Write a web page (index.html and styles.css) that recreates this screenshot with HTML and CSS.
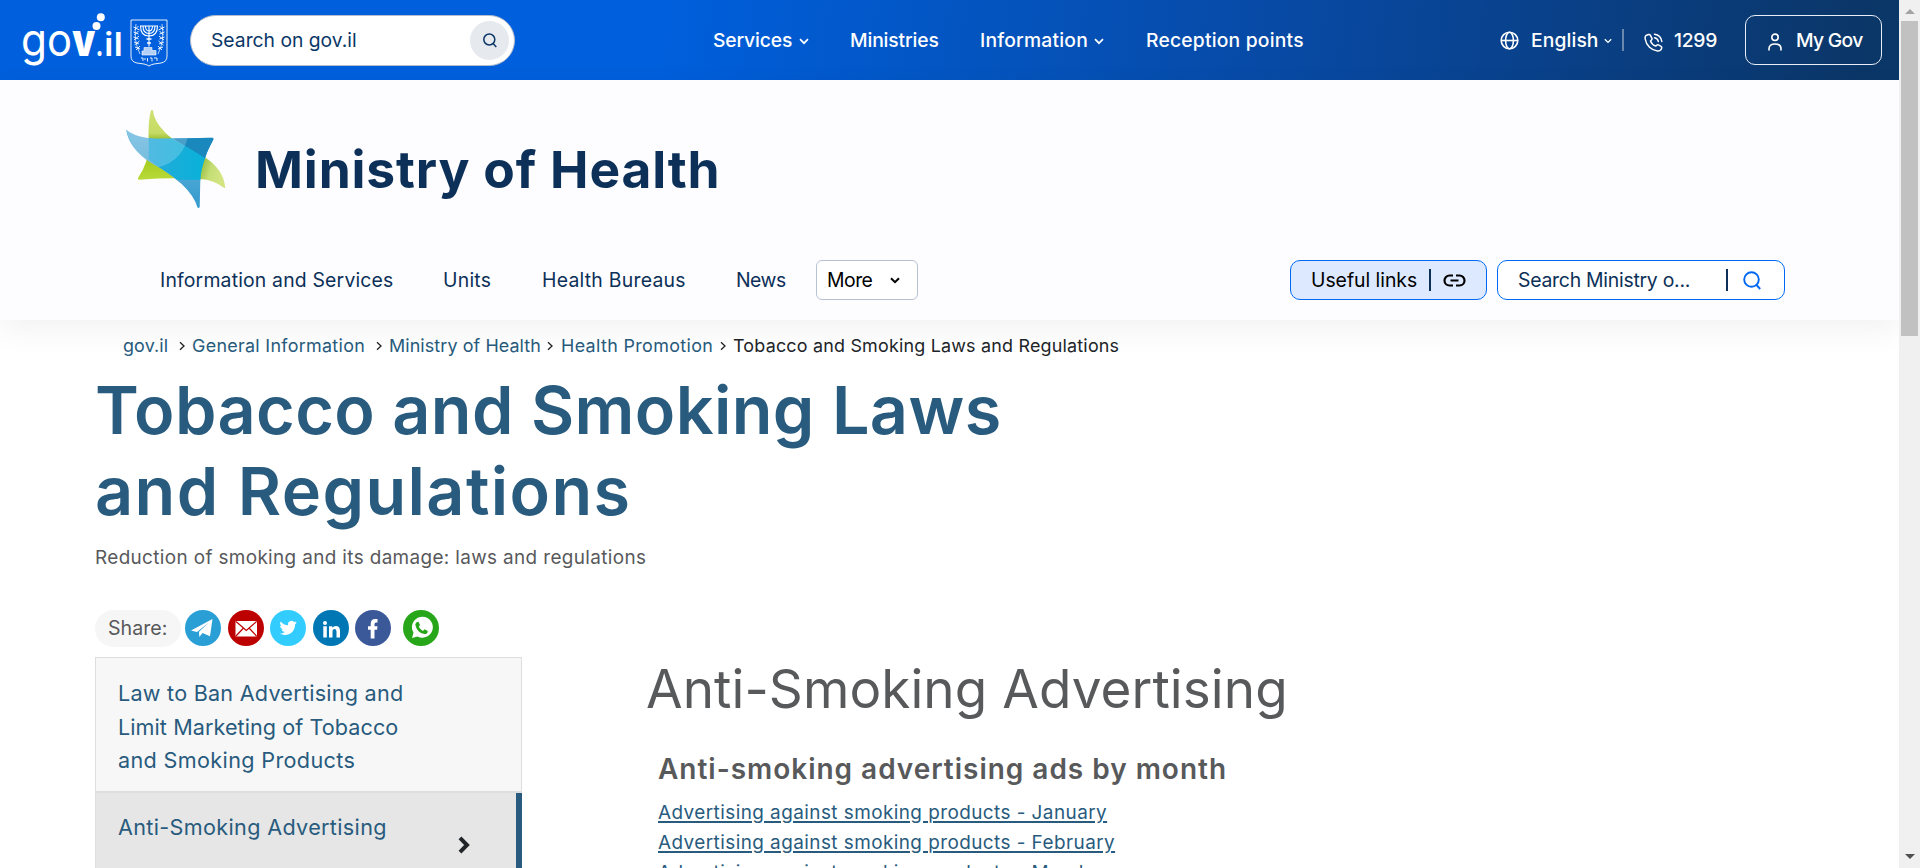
FILE: index.html
```html
<!DOCTYPE html>
<html lang="en">
<head>
<meta charset="utf-8">
<title>Tobacco and Smoking Laws and Regulations</title>
<link rel="stylesheet" href="styles.css">
</head>
<body>
<div class="window">
<div class="page">
  <header class="topbar">
    <svg class="gov-logo" width="106" height="62" viewBox="20 8 106 62" fill="#fff">
      <text class="logo-thin" x="21" y="56" textLength="26" lengthAdjust="spacingAndGlyphs">g</text>
      <text class="logo-thin" x="47" y="56" textLength="25" lengthAdjust="spacingAndGlyphs">o</text>
      <text class="logo-bold" x="72.200" y="56" textLength="23" lengthAdjust="spacingAndGlyphs">v</text>
      <text class="logo-small" x="95.500" y="56" textLength="8" lengthAdjust="spacingAndGlyphs">.</text>
      <text class="logo-small" x="104.300" y="56" textLength="9" lengthAdjust="spacingAndGlyphs">i</text>
      <text class="logo-small" x="113.800" y="56" textLength="9" lengthAdjust="spacingAndGlyphs">l</text>
      <circle cx="96.500" cy="26" r="4"/><circle cx="100.800" cy="17.200" r="4"/>
    </svg>
    <svg class="emblem" width="38" height="48" viewBox="0 0 38 48" fill="none" stroke="#fff">
      <path d="M1 1h36v36q0 6-6 7l-7 1q-3 .5-5 2-2-1.500-5-2l-7-1q-6-1-6-7z" stroke-width=".9"/>
      <path d="M10.500 7q0 10 8.500 10t8.500-10M13 7q0 7.500 6 7.500t6-7.500M15.500 7q0 5 3.500 5t3.500-5M19 6.500v21M10 7h18" stroke-width="1.100"/>
      <path d="M16.500 20h5M17 24h4" stroke-width="1.500"/>
      <path d="M14 28.500h8v3h4V36H12v-4h2z" fill="#fff" fill-opacity=".7" stroke-width=".6"/>
      <path d="M6 5q-3 16 4 30M32 5q3 16-4 30" stroke-width=".7"/>
      <path d="M3.500 8l6 3M3.500 13l5 2M3.500 18l5 2M4 23l5 2M5 28l5 2M8.500 7l-4 4M8.500 12l-4 4M9 17l-5 4M9.500 22l-5 4M10 27l-4 4M34.500 8l-6 3M34.500 13l-5 2M34.500 18l-5 2M34 23l-5 2M33 28l-5 2M29.500 7l4 4M29.500 12l4 4M29 17l5 4M28.500 22l5 4M28 27l4 4" stroke-width=".9"/>
      <path d="M11 39h2v3M15 39v2M17.500 39v3.500M20 39h2v3.500M24 39h3v3" stroke-width=".9"/>
    </svg>
    <div class="gov-search"><span class="t-search">Search on gov.il</span>
      <span class="round"><svg width="14" height="15" viewBox="0 0 14 15" fill="none" stroke="#0b3668" stroke-width="1.500"><circle cx="6.300" cy="6.500" r="5.500"/><path d="M10.300 10.700l3 3.200"/></svg></span>
    </div>
    <nav class="topnav">
      <span class="n-services">Services</span><svg class="chev c1" viewBox="0 0 10 7"><path d="M1 1.200l4 4 4-4"/></svg>
      <span class="n-min">Ministries</span>
      <span class="n-info">Information</span><svg class="chev c2" viewBox="0 0 10 7"><path d="M1 1.200l4 4 4-4"/></svg>
      <span class="n-rec">Reception points</span>
    </nav>
    <div class="tools">
      <svg width="19" height="19" viewBox="0 0 19 19" fill="none" stroke="#fff" stroke-width="1.600"><circle cx="9.500" cy="9.500" r="8.300"/><ellipse cx="9.500" cy="9.500" rx="3.900" ry="8.300"/><path d="M1.500 9.500h16"/></svg>
      <span class="t-eng">English</span><svg class="chev c3" viewBox="0 0 10 7"><path d="M1 1.200l4 4 4-4"/></svg>
      <i class="sep"></i>
      <svg class="phone" width="19" height="19" viewBox="0 0 19 19" fill="none" stroke="#fff" stroke-width="1.500" stroke-linecap="round" stroke-linejoin="round"><path d="M4.500 1.500L2 2.500Q.8 3.500 1.200 6 2 11 5.500 14.300 9 17.600 13.500 18q2.500.2 3.500-1.300l.7-1.700q.2-1-.7-1.600l-2.500-1.500q-1-.5-1.800.3l-.9.900Q8 12 6.500 8l1-1q.8-.8.400-1.700L6.300 2.200q-.6-1-1.800-.7z"/><path d="M10.500 1.200q6.500.8 7.300 7.300M10.500 4.700q3.300.5 3.800 3.800"/></svg>
      <span class="t-1299">1299</span>
      <div class="mygov"><svg width="14" height="18" viewBox="0 0 14 18" fill="none" stroke="#fff" stroke-width="1.600" stroke-linecap="round"><circle cx="7" cy="4.300" r="3.200"/><path d="M1 17v-1.200q0-4.800 6-4.800t6 4.800V17"/></svg><span>My Gov</span></div>
    </div>
  </header>
  <section class="ministry">
    <div class="brand">
      <svg width="102" height="100" viewBox="125.500 109 101 99" preserveAspectRatio="none">
        <defs>
          <linearGradient id="g" x1="0" y1="0" x2="0" y2="1"><stop offset="0" stop-color="#cfe06f"/><stop offset=".33" stop-color="#c6dc66"/><stop offset=".42" stop-color="#9dbf33"/><stop offset=".7" stop-color="#a4cc1c"/><stop offset="1" stop-color="#b9da3a"/></linearGradient>
          <linearGradient id="r" x1="0" y1="0" x2="1" y2=".4"><stop offset="0" stop-color="#8fb63b"/><stop offset=".5" stop-color="#c6de76"/><stop offset="1" stop-color="#d2e582"/></linearGradient>
          <linearGradient id="b" x1="0" y1="0" x2="0" y2="1"><stop offset="0" stop-color="#6db8df"/><stop offset=".5" stop-color="#52abd6"/><stop offset="1" stop-color="#3299cd"/></linearGradient>
          <linearGradient id="c" x1="0" y1="0" x2="1" y2="0"><stop offset="0" stop-color="#25aadb"/><stop offset="1" stop-color="#08b2d8"/></linearGradient>
          <clipPath id="star"><path d="M126.500 129.300Q137 138.500 161 138.500L212 137.500q1.500.3 1 1.800Q207 151 206 154 200 170 200 182L199.500 206q-1 1.500-2.200.5Q194 195 181.600 183.300 172 175 161 168 130 152 126.500 129.300z"/></clipPath>
        </defs>
        <path fill="url(#g)" d="M151.500 110q1.500-.5 1.800 1Q154 121 166 133q6 6 16 11 18 10 24 15l-4 19.500Q175 176.500 139 179q-1.300-.5-.5-2Q149 162 149 145 148 120 151.500 110z"/>
        <path fill="url(#r)" d="M205 157Q223 169 224.700 186.500q-.3 1-1 .8-9.700-8-23-9z"/>
        <g clip-path="url(#star)">
          <path fill="url(#b)" d="M125 125h92v84h-92z"/>
          <path fill="#1a87bd" d="M166 134h50l-8 27-26-17z"/>
          <path fill="url(#c)" d="M149 134l17-1q6 6 16 11 18 10 24 15l-5 20h-24q-8-7-16-11l-12-9z"/>
          <path fill="#fff" fill-opacity=".2" d="M124 120h66q-1 40-33 47-25-10-33-47z"/>
        </g>
      </svg>
      <h1 class="ministry-name">Ministry of Health</h1>
    </div>
    <div class="subnav">
      <span class="m1">Information and Services</span><span class="m2">Units</span><span class="m3">Health Bureaus</span><span class="m4">News</span>
      <div class="more"><span>More</span><svg class="chev dark" viewBox="0 0 10 7"><path d="M1 1.200l4 4 4-4"/></svg></div>
      <div class="useful"><span>Useful links</span><i></i><svg width="23" height="13" viewBox="0 0 23 13" fill="none" stroke="#000" stroke-width="2.200"><path d="M10 1.500H6.500a5 5 0 000 10H10M13 1.500h3.500a5 5 0 010 10H13M7.500 6.500h8"/></svg></div>
      <div class="msearch"><span>Search Ministry o...</span><i></i><svg width="18" height="19" viewBox="0 0 18 19" fill="none" stroke="#0068f5" stroke-width="1.900"><circle cx="8.500" cy="8.500" r="7.300"/><path d="M13.500 14l3.700 4"/></svg></div>
    </div>
  </section>
  <main>
    <nav class="crumbs">
      <span class="b1">gov.il</span><svg viewBox="0 0 6 9"><path d="M1 .8l4 3.700-4 3.700"/></svg>
      <span class="b2">General Information</span><svg viewBox="0 0 6 9"><path d="M1 .8l4 3.700-4 3.700"/></svg>
      <span class="b3">Ministry of Health</span><svg viewBox="0 0 6 9"><path d="M1 .8l4 3.700-4 3.700"/></svg>
      <span class="b4">Health Promotion</span><svg viewBox="0 0 6 9"><path d="M1 .8l4 3.700-4 3.700"/></svg>
      <span class="b5">Tobacco and Smoking Laws and Regulations</span>
    </nav>
    <h1 class="title"><span class="l1">Tobacco and Smoking Laws</span><br><span class="l2">and Regulations</span></h1>
    <p class="subtitle">Reduction of smoking and its damage: laws and regulations</p>
    <div class="share">
      <span class="pill">Share:</span>
      <svg viewBox="0 0 36 36"><circle cx="18" cy="18" r="18" fill="#2a9fd6"/><path fill="#fff" d="M6 20.500L27.500 9l-2.500 17.300-7.500-3.300-3.200 4-.3-5.300L24 12.500 12 22z"/></svg>
      <svg viewBox="0 0 36 36"><circle cx="18" cy="18" r="18" fill="#bd0000"/><rect x="7.500" y="11" width="21.500" height="15.500" rx="1" fill="#fff"/><path d="M8 11.500l10.300 9 10.300-9M8 26l7.500-8M28.500 26L21 18" fill="none" stroke="#bd0000" stroke-width="1.200"/></svg>
      <svg viewBox="0 0 36 36"><circle cx="18" cy="18" r="18" fill="#33ccff"/><path fill="#fff" transform="translate(9.500 9.300) scale(.72)" d="M24 4.560a9.800 9.800 0 01-2.830.770 4.930 4.930 0 002.170-2.720 9.900 9.900 0 01-3.130 1.190 4.920 4.920 0 00-8.380 4.480A13.940 13.940 0 011.670 3.150 4.920 4.920 0 003.190 9.720 4.900 4.900 0 01.960 9.110a4.920 4.920 0 003.950 4.890 5 5 0 01-2.220.080 4.930 4.930 0 004.600 3.420A9.870 9.870 0 010 19.540a13.940 13.940 0 007.550 2.210c9.140 0 14.300-7.720 13.990-14.650A10 10 0 0024 4.560z"/></svg>
      <svg viewBox="0 0 36 36"><circle cx="18" cy="18" r="18" fill="#0077b5"/><g fill="#fff"><circle cx="12" cy="13" r="2"/><path d="M10.300 16.200h3.500V27.500h-3.500zM16 16.200h3.300v1.500q1.200-1.800 3.600-1.800 4.100 0 4.100 5v6.600h-3.500v-6q0-2.600-1.900-2.600-2.100 0-2.100 2.700v5.900H16z"/></g></svg>
      <svg viewBox="0 0 36 36"><circle cx="18" cy="18" r="18" fill="#3b5999"/><path fill="#fff" d="M15.700 28.500V19.700H13v-3.500h2.700v-2.500q0-4.700 4.500-4.700h2.300v3.400H21q-1.500 0-1.500 1.700v2.100h3l-.4 3.500h-2.600v8.800z"/></svg>
      <svg class="wa" viewBox="0 0 36 36"><circle cx="18" cy="18" r="18" fill="#27a619"/><path fill="#fff" d="M9 28l1.500-5.200a10.500 10.500 0 114 3.700z"/><path fill="#27a619" d="M15.500 11.800l1.500 3.200-1.200 1.700q1.500 3 4.200 4.200l1.500-1.700 3.300 1.700q.2 3-3.500 3.200-7.300-1-9-9.300.5-3 3.200-3z"/></svg>
    </div>
    <div class="cols">
      <aside class="side">
        <div class="item"><span class="s1">Law to Ban Advertising and</span><br><span class="s2">Limit Marketing of Tobacco</span><br><span class="s3">and Smoking Products</span></div>
        <div class="item active"><span class="s4">Anti-Smoking Advertising</span><svg width="13" height="18" viewBox="0 0 13 18" fill="none" stroke="#212529" stroke-width="4"><path d="M2 1.800L9 9l-7 7.200"/></svg></div>
      </aside>
      <article>
        <h2>Anti-Smoking Advertising</h2>
        <h3>Anti-smoking advertising ads by month</h3>
        <a>Advertising against smoking products - January</a>
        <a>Advertising against smoking products - February</a>
        <a>Advertising against smoking products - March</a>
      </article>
    </div>
  </main>
</div>
<div class="scrollbar"><i class="up"></i><i class="thumb"></i><i class="down"></i></div>
</div>
</body>
</html>
```
FILE: styles.css
```css
*{box-sizing:border-box}
body{margin:0;font-family:Inter,Roboto,"Liberation Sans",sans-serif;background:#fff;overflow:hidden}
h1,h2,h3,p{margin:0;font-weight:400}
svg{display:block;flex:none}
span,a{white-space:nowrap}
.window{display:flex;width:1920px;height:868px;overflow:hidden}
.page{width:1899px;height:868px;overflow:hidden;display:flex;flex-direction:column}

.topbar{height:80px;flex:none;display:flex;align-items:center;background:linear-gradient(97deg,#005fdc 0,#005fdc 35%,#0848a0 70%,#0b3668 98%);color:#fff;font-size:19.300px;font-weight:500}
.gov-logo{margin:-2px 0 0 20px}
.logo-thin{font:400 45px Inter,sans-serif}
.logo-bold{font:900 45px Inter,sans-serif}
.logo-small{font:600 33px Inter,sans-serif}
.emblem{margin:5px 0 0 4px}
.gov-search{margin-left:22px;width:325px;height:51px;border:1px solid #b3bccb;border-radius:26px;background:#fff;display:flex;align-items:center;justify-content:space-between;padding:0 5px 0 20px;color:#0b3668;font-weight:400}
.round{width:39px;height:39px;border-radius:50%;background:#e6e9ee;display:flex;align-items:center;justify-content:center}
.topnav{display:flex;align-items:center;margin-left:198px}
.n-services{width:81px;letter-spacing:-.15px}
.n-min{width:88px;margin-left:41px;letter-spacing:-.15px}
.n-info{width:109px;margin-left:42px;letter-spacing:.2px}
.n-rec{width:158px;margin-left:42px;letter-spacing:.2px}
.chev{width:10px;height:7px;fill:none;stroke:#fff;stroke-width:1.700}
.c1,.c2{margin:2px 0 0 5px}
.c3{width:8px;height:6px;margin:2px 0 0 6px}
.tools{display:flex;align-items:center;margin-left:196px}
.t-eng{width:67px;margin-left:12px;letter-spacing:.1px}
.t-1299{width:44px;margin-left:11px;letter-spacing:-.3px}
.sep{width:2px;height:22px;background:#6c87ac;margin-left:10px}
.phone{margin:4px 0 0 20px}
.mygov{width:137px;height:50px;margin-left:27px;border:1px solid #e8eef6;border-radius:10px;display:flex;align-items:center;padding-left:22px}
.mygov svg{margin-top:3px}
.mygov span{margin-left:14px;letter-spacing:-.7px}

.ministry{height:240px;flex:none;background:#fdfdff;box-shadow:0 10px 30px rgba(0,0,0,.055);position:relative}
.brand{display:flex;padding:29px 0 0 125px;height:180px}
.ministry-name{margin:30px 0 0 28px;font-size:51.500px;line-height:60px;font-weight:700;letter-spacing:.850px;color:#0c3058;white-space:nowrap}
.subnav{display:flex;align-items:center;height:40px;padding-left:160px;color:#0c3058;font-size:19.400px}
.m1{width:234px;letter-spacing:.18px}
.m2{width:49px;margin-left:49px;letter-spacing:.25px}
.m3{width:144px;margin-left:50px;letter-spacing:.25px}
.m4{width:50px;margin-left:50px;letter-spacing:-.5px}
.more{margin-left:30px;width:102px;height:40px;border:1px solid #b6c1d1;border-radius:6px;display:flex;align-items:center;padding-left:10px;color:#000;background:#fff}
.more span{width:45px;letter-spacing:-.5px}
.dark{stroke:#000;stroke-width:2;margin-left:18px}
.useful,.msearch{height:40px;border:1px solid #0068f5;border-radius:10px;display:flex;align-items:center}
.useful{margin-left:372px;width:197px;background:#dce9ff;color:#000;padding-left:20px}
.useful span{width:106px;letter-spacing:-.03px}
.useful i,.msearch i{width:2px;height:22px;background:#0c3058;margin-left:12px}
.useful svg{margin-left:12px}
.msearch{margin-left:10px;width:288px;background:#fff;padding-left:20px}
.msearch span{width:172px;letter-spacing:-.25px}
.msearch i{margin-left:36px}
.msearch svg{margin-left:15px}

main{padding-left:95px}
.crumbs{display:flex;align-items:center;height:24px;margin:13px 0 0 28px;font-size:17.900px;color:#285b7d}
.crumbs svg{width:6px;height:10px;fill:none;stroke:#222;stroke-width:1.300;margin-top:1px}
.b1{width:56px;letter-spacing:.15px}
.b2{width:178px;margin-left:7px;letter-spacing:.3px}
.b2+svg{margin-left:6px}
.b3{width:153px;margin-left:7px;letter-spacing:.1px}
.b3+svg{margin-left:5px}
.b4{width:153px;margin-left:8px;letter-spacing:.36px}
.b4+svg{margin-left:6px}
.b5{margin-left:7px;letter-spacing:.21px;color:#212529}
.title{font-size:66.500px;line-height:81px;font-weight:600;color:#285b7d;margin-top:13px}
.l1{letter-spacing:.38px}
.l2{letter-spacing:1.4px}
.subtitle{font-size:18.900px;line-height:28px;letter-spacing:.370px;color:#58595b;margin-top:12px}
.share{display:flex;align-items:flex-start;margin-top:38px;height:47px}
.share svg{width:36px;height:36px;margin-right:6.600px}
.share .wa{margin-left:5px}
.pill{width:86px;height:37px;border-radius:19px;background:#f6f6f6;color:#58595b;font-size:19.600px;line-height:37px;padding-left:13px;margin-right:4px}
.cols{display:flex}
.side{width:427px;height:220px;flex:none;border:1px solid #dedede;border-bottom:0;background:#f7f7f7;font-size:21.600px;line-height:33.600px;color:#285b7d}
.item{height:135px;padding:19px 0 0 22px;border-bottom:2px solid #dedede}
.active{height:90px;padding-top:18px;background:#e6e6e6;border-right:6px solid #285b7d;border-bottom:0;margin-right:-1px;display:flex}
.active svg{margin:25px 0 0 72px}
.s1{letter-spacing:.24px}
.s2{letter-spacing:.07px}
.s3{letter-spacing:.35px}
.s4{letter-spacing:.34px;width:268px}
article{margin-left:124px;color:#58595b;display:flex;flex-direction:column;align-items:flex-start}
h2{font-size:53px;line-height:64px;letter-spacing:.080px}
h3{font-size:28px;line-height:36px;font-weight:600;letter-spacing:.980px;margin:30px 0 11px 12px}
article a{font-size:18.900px;line-height:30px;letter-spacing:.45px;color:#285b7d;text-decoration:underline;text-decoration-thickness:1.500px;text-underline-offset:2px;margin-left:12px}

.scrollbar{width:21px;height:868px;background:#f0f0f0;display:flex;flex-direction:column;align-items:center}
.scrollbar i{flex:none}
.up{border:5px solid transparent;border-bottom-color:#a3a3a3;border-top:0;margin-top:9px}
.thumb{width:17px;height:315px;background:#c1c1c1;margin-top:7px}
.down{border:5px solid transparent;border-top-color:#505050;border-bottom:0;margin-top:518px}
```
